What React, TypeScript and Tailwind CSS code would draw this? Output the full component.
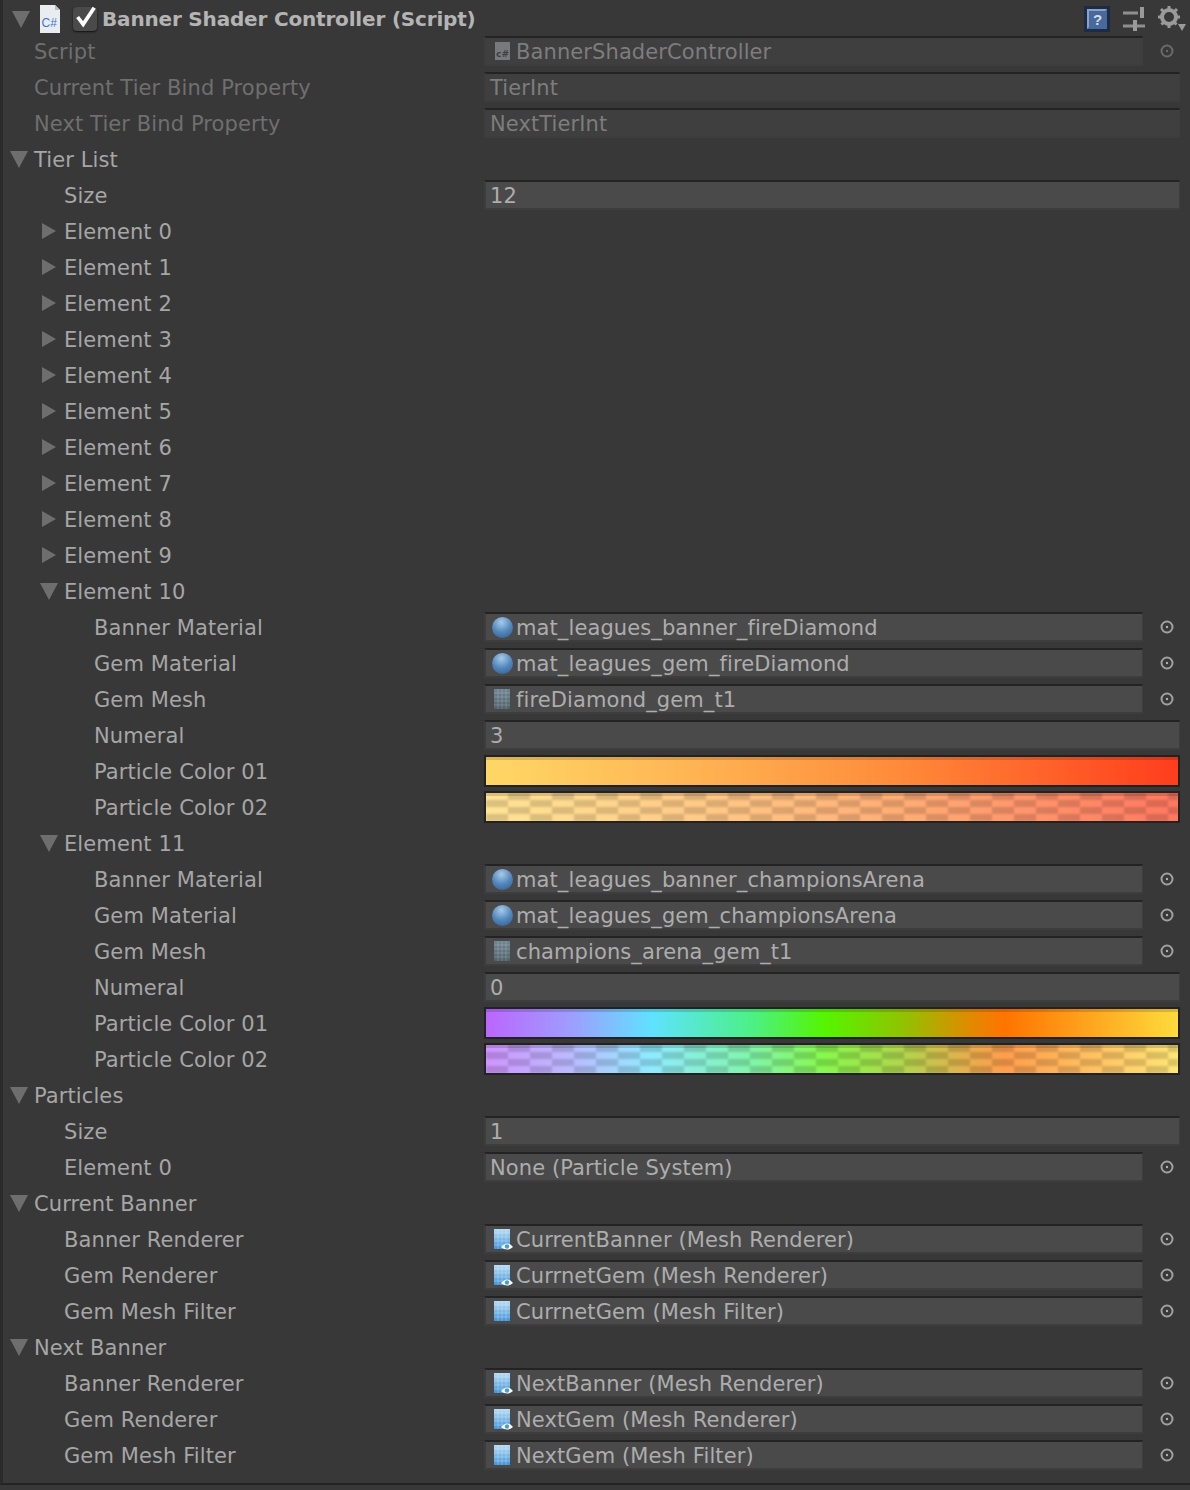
import React from 'react';

type FieldKind = 'object' | 'text' | 'swatch';
type IconKind = 'script' | 'sphere' | 'mesh' | 'renderer' | 'filter' | 'none';

interface RowData {
  label: string;
  indent: number;
  fold?: 'open' | 'closed';
  disabled?: boolean;
  kind?: FieldKind;
  value?: string;
  icon?: IconKind;
  gradient?: 0 | 1;
  alpha?: boolean;
}

const Triangle = ({ open }: { open: boolean }) => (
  <svg width="18" height="18" viewBox="0 0 18 18" className="shrink-0">
    {open ? <polygon points="0,1 18,1 9,18" fill="#6e6e6e" /> : <polygon points="2,1 16,9 2,17" fill="#6e6e6e" />}
  </svg>
);

const Picker = ({ dim }: { dim?: boolean }) => (
  <svg width="16" height="16" viewBox="0 0 16 16">
    <circle cx="8" cy="8" r="5.5" fill="none" stroke={dim ? '#6a6a6a' : '#a0a0a0'} strokeWidth="2" />
    <circle cx="8" cy="8" r="1.2" fill={dim ? '#6a6a6a' : '#b0b0b0'} />
  </svg>
);

const FieldIcon = ({ icon }: { icon: IconKind }) => {
  if (icon === 'sphere') {
    return <span className="ml-[2px] h-[21px] w-[21px] shrink-0 rounded-full bg-[radial-gradient(circle_at_45%_25%,#a8cbe6,#5388bd_50%,#2d5a8c)]" />;
  }
  if (icon === 'script') {
    return (
      <span className="ml-[5px] flex h-[18px] w-[15px] shrink-0 items-end justify-center bg-[#77797b] text-[9px] leading-[12px] font-bold text-[#3a3f48]">c#</span>
    );
  }
  const isMesh = icon === 'mesh';
  return (
    <svg width="24" height="24" viewBox="0 0 24 24" className="shrink-0">
      <defs>
        <linearGradient id={`g-${icon}`} x1="0" y1="0" x2="0" y2="1">
          <stop offset="0" stopColor={isMesh ? '#6f8593' : '#b6dcf5'} />
          <stop offset="1" stopColor={isMesh ? '#4f626c' : '#3f94d8'} />
        </linearGradient>
      </defs>
      <rect x="4" y="2" width="16" height="20" fill={`url(#g-${icon})`} />
      {[8, 12, 16].map((x) => (
        <line key={x} x1={x} y1="2" x2={x} y2="22" stroke="#ffffff" strokeOpacity={isMesh ? 0.18 : 0.25} />
      ))}
      {[6, 10, 14, 18].map((y) => (
        <line key={y} x1="4" y1={y} x2="20" y2={y} stroke="#ffffff" strokeOpacity={isMesh ? 0.18 : 0.25} />
      ))}
      {icon === 'renderer' && (
        <>
          <path d="M11 20 Q17 13 23 20 Q17 25 11 20Z" fill="#ffffff" />
          <circle cx="17" cy="19.5" r="2.2" fill="#4d9bd6" />
        </>
      )}
    </svg>
  );
};

const Swatch = ({ gradient, alpha }: { gradient: 0 | 1; alpha?: boolean }) => (
  <div className="h-[32px] min-w-0 flex-1 border-[2px] border-[#222222]">
    <div className={gradient === 0
      ? 'relative h-full overflow-hidden bg-[linear-gradient(90deg,#ffd766_0%,#ffb454_30%,#ff8a3a_60%,#ff3d1c_100%)]'
      : 'relative h-full overflow-hidden bg-[linear-gradient(90deg,#bb66ff_0%,#9f9cff_12%,#5fe2ff_24%,#4cf08a_38%,#55f500_49%,#8fc400_60%,#e08a00_70%,#ff7400_75%,#ffa820_88%,#ffdb3c_100%)]'}>
      {alpha && (
        <>
          <div className="absolute inset-0 bg-white/30" />
          <div className="absolute inset-0 bg-[conic-gradient(#00000024_25%,transparent_0_50%,#00000024_0_75%,transparent_0)] bg-[length:44px_14px] blur-[1px]" />
        </>
      )}
      <div className="absolute inset-x-0 top-0 h-[3px] bg-black/15" />
    </div>
  </div>
);

const Field = ({ row }: { row: RowData }) => {
  const dim = row.disabled;
  const hasIcon = row.icon && row.icon !== 'none';
  return (
    <div className={`flex h-[30px] min-w-0 flex-1 items-center border-t-[2px] border-r-[1px] border-b-[2px] border-l-[2px] border-t-[#232323] border-r-[#3d3d3d] border-b-[#3d3d3d] border-l-[#3d3d3d] pl-1 text-[21px] leading-none tracking-[0.1px] whitespace-nowrap ${dim ? 'bg-[#3f3f3f] text-[#7d7d7d]' : 'bg-[#4a4a4a] text-[#adadad]'}`}>
      {hasIcon && (
        <span className="flex w-[26px] shrink-0 items-center">
          <FieldIcon icon={row.icon as IconKind} />
        </span>
      )}
      <span className="pt-[2px]">{row.value}</span>
    </div>
  );
};

const rows: RowData[] = [
  { label: 'Script', indent: 34, disabled: true, kind: 'object', value: 'BannerShaderController', icon: 'script' },
  { label: 'Current Tier Bind Property', indent: 34, disabled: true, kind: 'text', value: 'TierInt' },
  { label: 'Next Tier Bind Property', indent: 34, disabled: true, kind: 'text', value: 'NextTierInt' },
  { label: 'Tier List', indent: 34, fold: 'open' },
  { label: 'Size', indent: 64, kind: 'text', value: '12' },
  ...[0, 1, 2, 3, 4, 5, 6, 7, 8, 9].map((n): RowData => ({ label: `Element ${n}`, indent: 64, fold: 'closed' })),
  { label: 'Element 10', indent: 64, fold: 'open' },
  { label: 'Banner Material', indent: 94, kind: 'object', value: 'mat_leagues_banner_fireDiamond', icon: 'sphere' },
  { label: 'Gem Material', indent: 94, kind: 'object', value: 'mat_leagues_gem_fireDiamond', icon: 'sphere' },
  { label: 'Gem Mesh', indent: 94, kind: 'object', value: 'fireDiamond_gem_t1', icon: 'mesh' },
  { label: 'Numeral', indent: 94, kind: 'text', value: '3' },
  { label: 'Particle Color 01', indent: 94, kind: 'swatch', gradient: 0 },
  { label: 'Particle Color 02', indent: 94, kind: 'swatch', gradient: 0, alpha: true },
  { label: 'Element 11', indent: 64, fold: 'open' },
  { label: 'Banner Material', indent: 94, kind: 'object', value: 'mat_leagues_banner_championsArena', icon: 'sphere' },
  { label: 'Gem Material', indent: 94, kind: 'object', value: 'mat_leagues_gem_championsArena', icon: 'sphere' },
  { label: 'Gem Mesh', indent: 94, kind: 'object', value: 'champions_arena_gem_t1', icon: 'mesh' },
  { label: 'Numeral', indent: 94, kind: 'text', value: '0' },
  { label: 'Particle Color 01', indent: 94, kind: 'swatch', gradient: 1 },
  { label: 'Particle Color 02', indent: 94, kind: 'swatch', gradient: 1, alpha: true },
  { label: 'Particles', indent: 34, fold: 'open' },
  { label: 'Size', indent: 64, kind: 'text', value: '1' },
  { label: 'Element 0', indent: 64, kind: 'object', value: 'None (Particle System)', icon: 'none' },
  { label: 'Current Banner', indent: 34, fold: 'open' },
  { label: 'Banner Renderer', indent: 64, kind: 'object', value: 'CurrentBanner (Mesh Renderer)', icon: 'renderer' },
  { label: 'Gem Renderer', indent: 64, kind: 'object', value: 'CurrnetGem (Mesh Renderer)', icon: 'renderer' },
  { label: 'Gem Mesh Filter', indent: 64, kind: 'object', value: 'CurrnetGem (Mesh Filter)', icon: 'filter' },
  { label: 'Next Banner', indent: 34, fold: 'open' },
  { label: 'Banner Renderer', indent: 64, kind: 'object', value: 'NextBanner (Mesh Renderer)', icon: 'renderer' },
  { label: 'Gem Renderer', indent: 64, kind: 'object', value: 'NextGem (Mesh Renderer)', icon: 'renderer' },
  { label: 'Gem Mesh Filter', indent: 64, kind: 'object', value: 'NextGem (Mesh Filter)', icon: 'filter' },
];

const Row = ({ row }: { row: RowData }) => (
  <div className="flex h-9 items-center pr-[10px]">
    <div className="relative flex w-[481px] shrink-0 items-center">
      {row.fold && (
        <span className="absolute" style={{ left: row.indent - 27 }}>
          <Triangle open={row.fold === 'open'} />
        </span>
      )}
      <span
        className={`pt-[2px] text-[21px] leading-none tracking-[0.1px] whitespace-nowrap ${row.disabled ? 'text-[#6f6f6f]' : 'text-[#a6a6a6]'}`}
        style={{ paddingLeft: row.indent - 3 }}
      >
        {row.label}
      </span>
    </div>
    {row.kind === 'swatch' && <Swatch gradient={row.gradient ?? 0} alpha={row.alpha} />}
    {row.kind === 'text' && <Field row={row} />}
    {row.kind === 'object' && (
      <>
        <Field row={row} />
        <div className="flex w-[37px] shrink-0 items-center justify-end pr-[5px]">
          <Picker dim={row.disabled} />
        </div>
      </>
    )}
  </div>
);

export default function App() {
  return (
    <div className="h-[1490px] w-[1190px] overflow-hidden bg-[#383838] font-['DejaVu_Sans','Open_Sans',sans-serif]">
      <div className="h-[1485px] border-b-[2px] border-l-[3px] border-b-[#232323] border-l-[#2a2a2a]">
        <div className="flex h-[33px] items-center pt-[4px] pr-[4px] pl-[9px]">
          <Triangle open />
          <svg width="20" height="28" viewBox="0 0 20 28" className="ml-[10px] shrink-0">
            <path d="M0 0H15L20 5V28H0Z" fill="#e9edf2" />
            <path d="M15 0L20 5H15Z" fill="#b9bec5" />
            <text x="1.5" y="22" fontSize="12" fill="#3f73d8" fontFamily="Liberation Sans, sans-serif">C#</text>
          </svg>
          <span className="ml-[13px] flex h-6 w-6 shrink-0 items-center justify-center rounded-[4px] bg-[#4a4a4a] shadow-[0_1px_2px_#111]">
            <svg width="26" height="26" viewBox="0 0 26 26" className="-mt-1">
              <path d="M5 13L11 21L23 3" fill="none" stroke="#ffffff" strokeWidth="4" />
            </svg>
          </span>
          <span className="mt-[1px] ml-[5px] text-[20px] leading-none font-bold tracking-[-0.18px] whitespace-nowrap text-[#b4b4b4]">Banner Shader Controller (Script)</span>
          <div className="ml-auto flex items-center gap-[13px]">
            <svg width="26" height="26" viewBox="0 0 26 26">
              <rect x="0" y="0" width="26" height="26" fill="#1d2c44" />
              <rect x="3" y="3" width="20" height="20" fill="#48699b" />
              <path d="M3 3H23L21 5H5V21L3 23Z" fill="#8aa3c4" />
              <text x="9" y="19" fontSize="15" fontWeight="bold" fill="#d5dde8" fontFamily="Liberation Sans, sans-serif">?</text>
            </svg>
            <svg width="22" height="24" viewBox="0 0 22 24">
              <path d="M0 6H15M0 19H22" stroke="#8f8f8f" strokeWidth="3" />
              <rect x="17" y="0" width="4" height="11" fill="#9a9a9a" />
              <rect x="10" y="13" width="4" height="11" fill="#9a9a9a" />
            </svg>
            <svg width="28" height="26" viewBox="0 0 28 26">
              <circle cx="11" cy="11" r="7" fill="none" stroke="#9a9a9a" strokeWidth="4" />
              <path d="M11 0V22M0 11H22M3 3L19 19M19 3L3 19" stroke="#9a9a9a" strokeWidth="3" strokeDasharray="4 14" />
              <polygon points="20,18 28,18 24,25" fill="#9a9a9a" />
            </svg>
          </div>
        </div>
        {rows.map((row, i) => (
          <Row key={i} row={row} />
        ))}
      </div>
    </div>
  );
}
